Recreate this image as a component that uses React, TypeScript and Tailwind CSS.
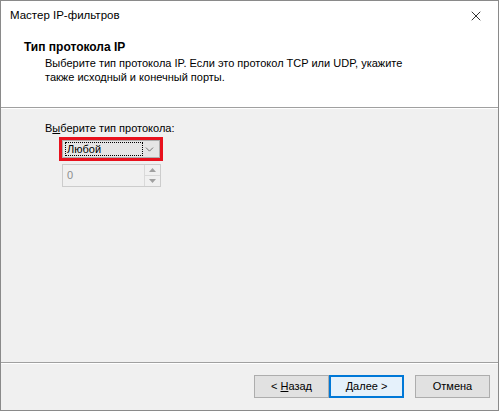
import { ChevronDown, X } from "lucide-react";

function App() {
  const font = { fontFamily: '"Liberation Sans", Arial, sans-serif' };

  return (
    <div
      className="flex h-[411px] w-[499px] flex-col border border-[#8a8a8a] bg-[#f0f0f0] text-[11px] text-black"
      style={font}
    >
      {/* title bar + header */}
      <div className="bg-white">
        <div className="flex h-[29px] items-center justify-between pl-[9px] pr-[14px] text-[11.5px]">
          <span>Мастер IP-фильтров</span>
          <X className="size-[16px]" strokeWidth={1.2} />
        </div>
        <div className="h-[77px] pl-[23px] pt-[10px]">
          <h1 className="text-[12px] font-bold leading-[15px]">Тип протокола IP</h1>
          <p className="mt-[1px] pl-[21px] leading-[14px]">
            Выберите тип протокола IP. Если это протокол TCP или UDP, укажите
            <br />
            также исходный и конечный порты.
          </p>
        </div>
      </div>
      <div className="h-px bg-[#a0a0a0]" />
      <div className="h-px bg-white" />

      {/* content */}
      <div className="flex-1 pl-[44px] pt-[12px]">
        <p className="leading-[15px]">
          В<span className="underline">ы</span>берите тип протокола:
        </p>
        <div className="ml-[14px] mt-px w-[104px] border-[3px] border-[#e8111d]">
          <div className="flex h-[18px] items-center border border-[#adadad] bg-[#e5e5e5] pl-[2px] pr-[3px]">
            <span className="flex h-[14px] w-[78px] shrink-0 items-center border border-dotted border-black pl-[1px] leading-none">
              Любой
            </span>
            <ChevronDown
              className="ml-auto size-[13px] shrink-0 text-[#505050]"
              strokeWidth={1.4}
            />
          </div>
        </div>
        <div className="ml-[17px] mt-[3px] flex h-[23px] w-[99px] items-center justify-between border border-[#cccccc] bg-[#f0f0f0] pl-[4px]">
          <span className="text-[#8d8d8d]">0</span>
          <div className="flex h-full w-[16px] flex-col border-l border-[#d9d9d9]">
            <div className="flex flex-1 items-center justify-center border-b border-[#d9d9d9]">
              <svg width="7" height="4" viewBox="0 0 7 4">
                <path d="M0 4 L3.5 0 L7 4 Z" fill="#a0a0a0" />
              </svg>
            </div>
            <div className="flex flex-1 items-center justify-center">
              <svg width="7" height="4" viewBox="0 0 7 4">
                <path d="M0 0 L3.5 4 L7 0 Z" fill="#a0a0a0" />
              </svg>
            </div>
          </div>
        </div>
      </div>

      {/* footer */}
      <div className="h-px bg-[#a0a0a0]" />
      <div className="h-px bg-white" />
      <div className="flex h-[46px] items-start pl-[253px] pt-[11px]">
        <button
          type="button"
          className="h-[23px] w-[75px] border border-[#adadad] bg-[#e1e1e1]"
        >
          &lt; <span className="underline">Н</span>азад
        </button>
        <button
          type="button"
          className="h-[23px] w-[75px] border-2 border-[#0078d7] bg-[#e5f1fb]"
        >
          <span className="underline">Д</span>алее &gt;
        </button>
        <button
          type="button"
          className="ml-[11px] h-[23px] w-[75px] border border-[#adadad] bg-[#e1e1e1]"
        >
          Отмена
        </button>
      </div>
    </div>
  );
}

export default App;
